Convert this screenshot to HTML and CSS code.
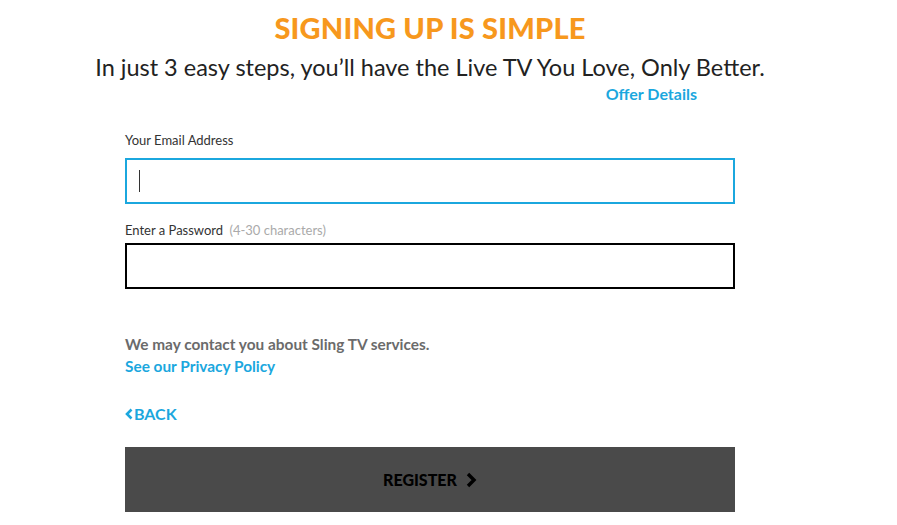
FILE: index.html
```html
<!DOCTYPE html>
<html>
<head>
<meta charset="utf-8">
<link rel="stylesheet" href="styles.css">
</head>
<body>
<div class="page">
  <header class="intro">
    <h1 class="title">SIGNING UP IS SIMPLE</h1>
    <p class="subtitle">In just 3 easy steps, you’ll have the Live TV You Love, Only Better.</p>
    <div class="offer-row"><a class="offer" href="#">Offer Details</a></div>
  </header>
  <form class="form">
    <label class="label">Your Email Address</label>
    <div class="input input-focus"><span class="caret"></span></div>
    <label class="label label-pw">Enter a Password <span class="hint">(4-30 characters)</span></label>
    <div class="input"></div>
    <p class="contact">We may contact you about Sling TV services.</p>
    <a class="privacy" href="#">See our Privacy Policy</a>
    <a class="back" href="#"><svg class="back-icon" viewBox="0 0 8 12" width="8" height="12"><path d="M6.5 1.5 L2 6 L6.5 10.5" fill="none" stroke="currentColor" stroke-width="2.6"/></svg>BACK</a>
    <div class="register">REGISTER <svg class="reg-icon" viewBox="0 0 12 16" width="12" height="16"><path d="M3 2 L9 8 L3 14" fill="none" stroke="#000" stroke-width="3.4"/></svg></div>
  </form>
</div>
</body>
</html>
```
FILE: styles.css
```css
html, body {
  margin: 0;
  padding: 0;
  background: #fff;
}
body {
  font-family: Lato, "Open Sans", sans-serif;
  color: #222;
  overflow: hidden;
}
.page {
  width: 860px;
}
.intro {
  display: flex;
  flex-direction: column;
  align-items: center;
}
.title {
  margin: 11px 0 0;
  font-size: 29px;
  line-height: 34px;
  font-weight: 900;
  color: #f7981d;
  letter-spacing: 0.2px;
}
.subtitle {
  margin: 9px 0 0;
  font-size: 23.5px;
  line-height: 27px;
  font-weight: 400;
  color: #222;
}
.offer-row {
  width: 534px;
  display: flex;
  justify-content: flex-end;
  margin-top: 3px;
}
.offer {
  font-size: 16px;
  font-weight: 700;
  color: #1ba7de;
  text-decoration: none;
  line-height: 19px;
}
.form {
  margin: 29px 0 0 125px;
  width: 610px;
  display: flex;
  flex-direction: column;
}
.label {
  font-size: 13px;
  line-height: 16px;
  color: #333;
  margin-bottom: 10px;
}
.label-pw {
  margin-top: 18px;
  margin-bottom: 5px;
}
.hint {
  color: #aaa;
  margin-left: 3px;
}
.input {
  box-sizing: border-box;
  height: 46px;
  border: 2px solid #000;
  display: flex;
  align-items: center;
  padding-left: 12px;
}
.input-focus {
  border-color: #1ba7de;
}
.caret {
  width: 1px;
  height: 22px;
  background: #333;
}
.contact {
  margin: 45px 0 0;
  font-size: 15.4px;
  line-height: 20px;
  font-weight: 700;
  color: #6b6b6b;
}
.privacy {
  margin-top: 2px;
  font-size: 15.4px;
  line-height: 20px;
  font-weight: 700;
  color: #1ba7de;
  text-decoration: none;
  align-self: flex-start;
}
.back {
  margin-top: 28px;
  font-size: 16px;
  line-height: 20px;
  font-weight: 700;
  color: #1ba7de;
  text-decoration: none;
  align-self: flex-start;
  display: flex;
  align-items: center;
}
.back-icon {
  margin-right: 1px;
}
.register {
  margin-top: 23px;
  height: 65px;
  box-sizing: border-box;
  background: #4a4a4a;
  display: flex;
  align-items: center;
  justify-content: center;
  font-size: 16px;
  font-weight: 900;
  color: #000;
  gap: 6px;
}
.reg-icon {
  margin-left: 2px;
}
```
